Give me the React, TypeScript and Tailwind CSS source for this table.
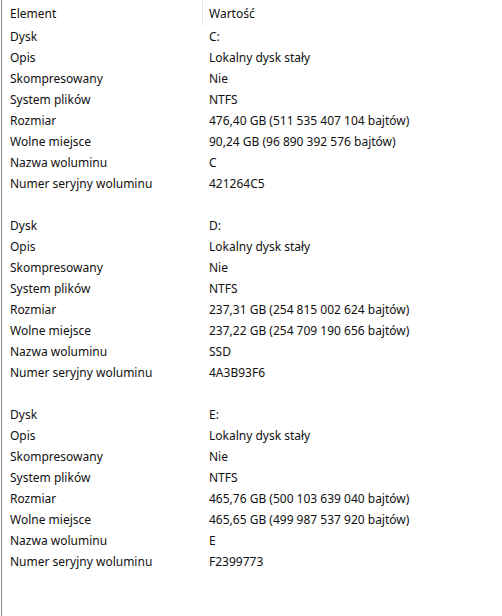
const disks = [
  {
    letter: "C:",
    size: "476,40 GB (511 535 407 104 bajtów)",
    free: "90,24 GB (96 890 392 576 bajtów)",
    name: "C",
    serial: "421264C5",
  },
  {
    letter: "D:",
    size: "237,31 GB (254 815 002 624 bajtów)",
    free: "237,22 GB (254 709 190 656 bajtów)",
    name: "SSD",
    serial: "4A3B93F6",
  },
  {
    letter: "E:",
    size: "465,76 GB (500 103 639 040 bajtów)",
    free: "465,65 GB (499 987 537 920 bajtów)",
    name: "E",
    serial: "F2399773",
  },
];

export default function App() {
  const rows: { label: string; value: string }[] = [];
  disks.forEach((d, i) => {
    if (i > 0) rows.push({ label: "", value: "" });
    rows.push({ label: "Dysk", value: d.letter });
    rows.push({ label: "Opis", value: "Lokalny dysk stały" });
    rows.push({ label: "Skompresowany", value: "Nie" });
    rows.push({ label: "System plików", value: "NTFS" });
    rows.push({ label: "Rozmiar", value: d.size });
    rows.push({ label: "Wolne miejsce", value: d.free });
    rows.push({ label: "Nazwa woluminu", value: d.name });
    rows.push({ label: "Numer seryjny woluminu", value: d.serial });
  });

  return (
    <div
      className="h-[616px] w-[502px] overflow-hidden bg-white pl-px text-[12px] text-[#111]"
      style={{ fontFamily: '"Segoe UI", "Noto Sans", sans-serif' }}
    >
      <div className="grid h-full grid-cols-[201px_1fr] content-start border-l border-[#8a8a8a]">
        {/* Header */}
        <div className="flex h-[26px] items-center border-r border-[#e5e5e5] pl-[8px] pt-[2px]">
          Element
        </div>
        <div className="flex h-[26px] items-center pl-[6px] pt-[2px]">Wartość</div>

        {rows.map((r, i) => (
          <div key={i} className="contents">
            <div className="flex h-[21px] items-center pl-[8px]">{r.label}</div>
            <div className="flex h-[21px] items-center pl-[6px]">{r.value}</div>
          </div>
        ))}
      </div>
    </div>
  );
}
